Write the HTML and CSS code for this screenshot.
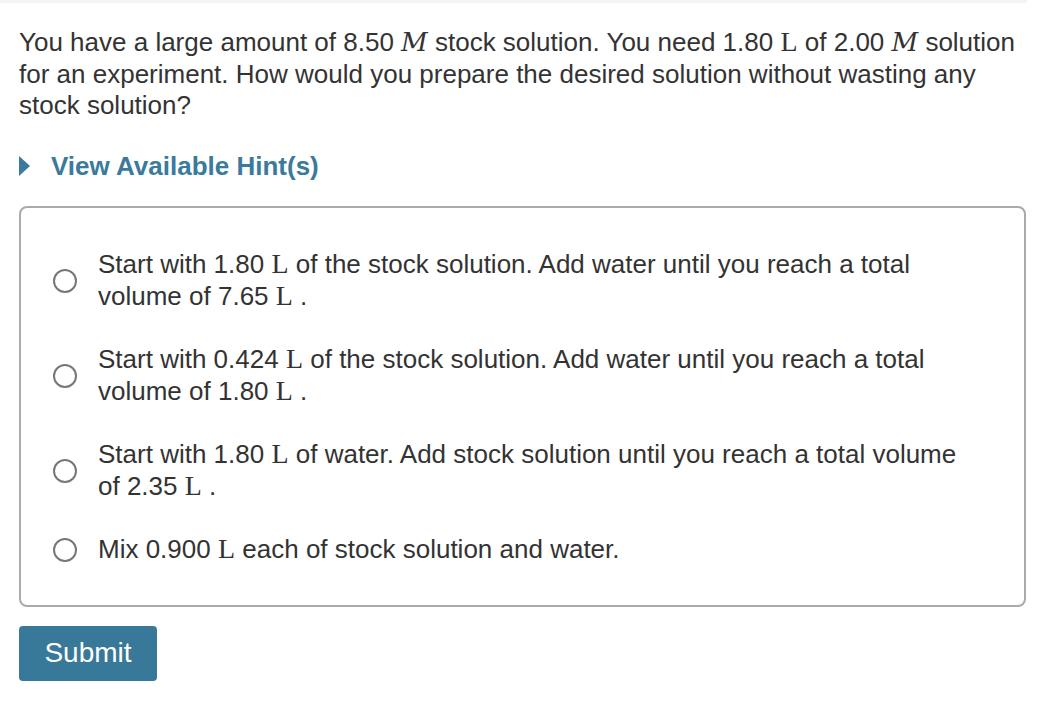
FILE: index.html
```html
<!DOCTYPE html>
<html>
<head>
<meta charset="utf-8">
<link rel="stylesheet" href="styles.css">
</head>
<body>
<div class="topbar"></div>
<main class="content">
  <p class="question">You have a large amount of 8.50 <span class="mi">M</span> stock solution. You need 1.80 <span class="mu">L</span> of 2.00 <span class="mi">M</span> solution for an experiment. How would you prepare the desired solution without wasting any stock solution?</p>
  <div class="hint">
    <span class="tri"></span>
    <span class="hint-text">View Available Hint(s)</span>
  </div>
  <div class="choices">
    <label class="choice"><span class="radio"></span><span class="ctext">Start with 1.80 <span class="mu">L</span> of the stock solution. Add water until you reach a total volume of 7.65 <span class="mu">L</span> .</span></label>
    <label class="choice"><span class="radio"></span><span class="ctext">Start with 0.424 <span class="mu">L</span> of the stock solution. Add water until you reach a total volume of 1.80 <span class="mu">L</span> .</span></label>
    <label class="choice"><span class="radio"></span><span class="ctext">Start with 1.80 <span class="mu">L</span> of water. Add stock solution until you reach a total volume of 2.35 <span class="mu">L</span> .</span></label>
    <label class="choice"><span class="radio"></span><span class="ctext">Mix 0.900 <span class="mu">L</span> each of stock solution and water.</span></label>
  </div>
  <button class="submit">Submit</button>
</main>
</body>
</html>
```

FILE: styles.css
```css
html, body {
  margin: 0;
  padding: 0;
  background: #ffffff;
}
body {
  font-family: "Liberation Sans", Arial, Helvetica, sans-serif;
  color: #333333;
  font-size: 26px;
}
.topbar {
  height: 3px;
  width: 1027px;
  background: #f4f4f4;
}
.content {
  padding: 24px 26px 0 19px;
}
.question {
  margin: 0;
  line-height: 31.5px;
}
.mi {
  font-family: "DejaVu Serif", "Liberation Serif", serif;
  font-style: italic;
  font-size: 26px;
  line-height: 1;
}
.mu {
  font-family: "Liberation Serif", "DejaVu Serif", serif;
  font-size: 28px;
  line-height: 1;
}
.hint {
  margin-top: 29px;
  display: flex;
  align-items: center;
  height: 31px;
  gap: 21px;
}
.tri {
  width: 0;
  height: 0;
  border-top: 10px solid transparent;
  border-bottom: 10px solid transparent;
  border-left: 11px solid #3a7a9b;
}
.hint-text {
  font-weight: bold;
  color: #3a7a9b;
}
.choices {
  margin-top: 24px;
  border: 2px solid #aaaaaa;
  border-radius: 8px;
  padding: 40px 62px 40px 32px;
  display: flex;
  flex-direction: column;
  gap: 31px;
}
.choice {
  display: flex;
  align-items: center;
  gap: 21px;
  line-height: 32px;
}
.radio {
  flex: none;
  width: 20px;
  height: 20px;
  border: 2px solid #777777;
  border-radius: 50%;
  margin-top: 2px;
}
.submit {
  margin-top: 19px;
  width: 138px;
  height: 55px;
  background: #387898;
  color: #ffffff;
  border: none;
  border-radius: 4px;
  font-family: "Liberation Sans", Arial, Helvetica, sans-serif;
  font-size: 28px;
  padding: 0;
}
```
